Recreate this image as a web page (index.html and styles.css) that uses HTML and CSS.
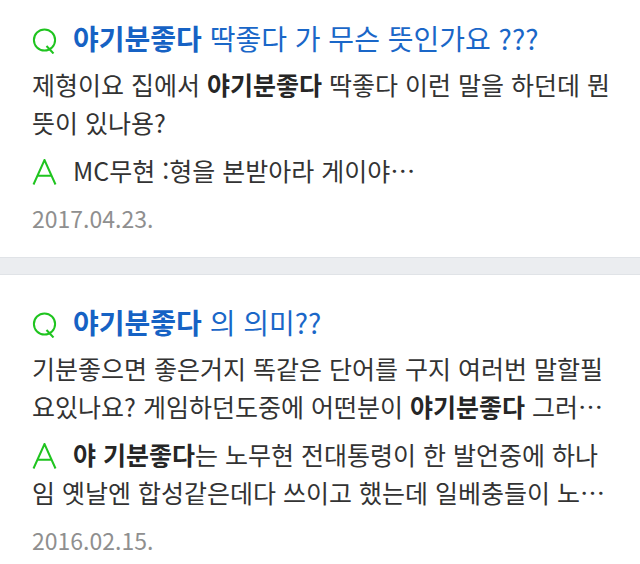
FILE: index.html
```html
<!DOCTYPE html>
<html lang="ko">
<head>
<meta charset="utf-8">
<title>지식iN</title>
<link rel="stylesheet" href="styles.css">
</head>
<body>
<div class="results">
  <section class="item">
    <h3 class="title"><span class="mark"><svg width="26" height="26" viewBox="0 0 26 26"><circle cx="12.5" cy="12" r="10.6" fill="none" stroke="#1fc41f" stroke-width="2"/><path d="M14.5 18 L21.5 25.5" stroke="#1fc41f" stroke-width="2"/></svg></span><b>야기분좋다</b> 딱좋다 가 무슨 뜻인가요 ???</h3>
    <p class="desc">제형이요 집에서 <b>야기분좋다</b> 딱좋다 이런 말을 하던데 뭔 뜻이 있나용?</p>
    <p class="answer"><span class="mark"><svg width="26" height="26" viewBox="0 0 26 26"><path d="M1.5 25.5 L12.5 1 L23.5 25.5 M5.6 16.8 H19.4" fill="none" stroke="#1fc41f" stroke-width="2"/></svg></span>MC무현 :형을 본받아라 게이야…</p>
    <p class="date">2017.04.23.</p>
  </section>
  <div class="gap"></div>
  <section class="item">
    <h3 class="title"><span class="mark"><svg width="26" height="26" viewBox="0 0 26 26"><circle cx="12.5" cy="12" r="10.6" fill="none" stroke="#1fc41f" stroke-width="2"/><path d="M14.5 18 L21.5 25.5" stroke="#1fc41f" stroke-width="2"/></svg></span><b>야기분좋다</b> 의 의미??</h3>
    <p class="desc">기분좋으면 좋은거지 똑같은 단어를 구지 여러번 말할필요있나요? 게임하던도중에 어떤분이 <b>야기분좋다</b> 그러…</p>
    <p class="answer"><span class="mark"><svg width="26" height="26" viewBox="0 0 26 26"><path d="M1.5 25.5 L12.5 1 L23.5 25.5 M5.6 16.8 H19.4" fill="none" stroke="#1fc41f" stroke-width="2"/></svg></span><b>야 기분좋다</b>는 노무현 전대통령이 한 발언중에 하나임 옛날엔 합성같은데다 쓰이고 했는데 일베충들이 노…</p>
    <p class="date">2016.02.15.</p>
  </section>
</div>
</body>
</html>
```
FILE: styles.css
```css
html, body {
  margin: 0;
  padding: 0;
  background: #fff;
}
body {
  font-family: "Noto Sans CJK KR", "Noto Sans", sans-serif;
  color: #333;
  width: 640px;
  height: 564px;
  overflow: hidden;
}
.results {
  margin-top: -9px;
}
.item {
  padding: 30px 24px 26px 32px;
}
.title {
  margin: 0;
  font-size: 28px;
  line-height: 34px;
  font-weight: 400;
  color: #1a67c8;
}
.title b {
  font-weight: 700;
  color: #1662c4;
}
.mark {
  display: inline-block;
  width: 41px;
}
.mark svg {
  display: inline-block;
  vertical-align: -4px;
}
.desc {
  margin: 10px 0 0;
  font-size: 25px;
  line-height: 38px;
  color: #333;
}
.desc b, .answer b {
  font-weight: 700;
  color: #262626;
}
.answer {
  margin: 10px 0 0;
  font-size: 25px;
  line-height: 38px;
  color: #333;
}
.date {
  margin: 16px 0 0;
  font-size: 23px;
  line-height: 26px;
  color: #8f8f8f;
}
.gap {
  height: 16px;
  background: #ebedf0;
  border-top: 1px solid #e0e3e7;
  border-bottom: 1px solid #e0e3e7;
}
```
